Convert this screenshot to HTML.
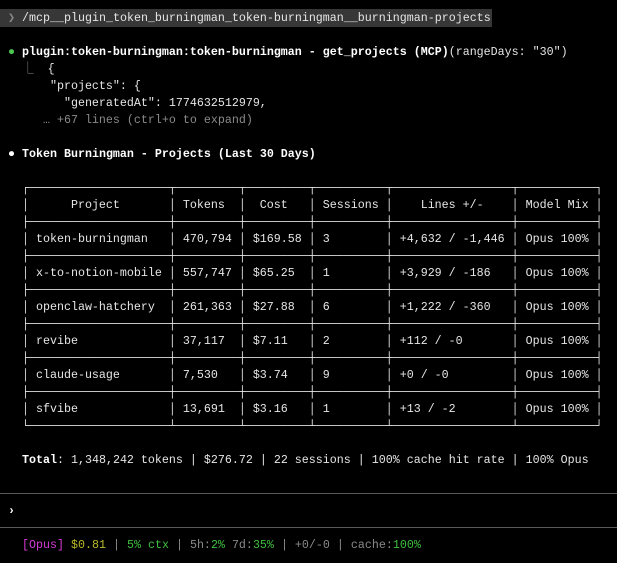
<!DOCTYPE html>
<html><head><meta charset="utf-8"><style>
html,body{margin:0;padding:0;background:#000;width:617px;height:563px;overflow:hidden}
body{font-family:"Liberation Mono","DejaVu Sans Mono",monospace;font-size:11.66px;color:#e6e6e6;position:relative}
.l{position:absolute;left:1px;height:17px;line-height:17px;white-space:pre}
b{font-weight:bold;color:#fff}
.g{color:#8a8a8a}
.hl{position:absolute;left:0;top:9px;width:492px;height:18px;background:#373737}
.rule{position:absolute;left:0;width:617px;height:1px;background:#5a5a5a}
</style></head><body>
<div class="hl"></div>
<div class="l" style="top:9.5px"> <span class="g">❯</span> /mcp__plugin_token_burningman_token-burningman__burningman-projects</div>
<div class="l" style="top:43.5px"> <span style="color:#4cc552">●</span> <b>plugin:token-burningman:token-burningman - get_projects (MCP)</b>(rangeDays: "30")</div>
<div class="l" style="top:60.5px">   <span class="g">⎿</span>  {</div>
<div class="l" style="top:77.5px">       "projects": {</div>
<div class="l" style="top:94.5px">         "generatedAt": 1774632512979,</div>
<div class="l g" style="top:111.5px">      … +67 lines (ctrl+o to expand)</div>
<div class="l" style="top:145.5px"> <span style="color:#fff">●</span> <b>Token Burningman - Projects (Last 30 Days)</b></div>
<div class="l" style="top:179.5px">   ┌────────────────────┬─────────┬─────────┬──────────┬─────────────────┬───────────┐</div>
<div class="l" style="top:196.5px">   │      Project       │ Tokens  │  Cost   │ Sessions │    Lines +/-    │ Model Mix │</div>
<div class="l" style="top:213.5px">   ├────────────────────┼─────────┼─────────┼──────────┼─────────────────┼───────────┤</div>
<div class="l" style="top:230.5px">   │ token-burningman   │ 470,794 │ $169.58 │ 3        │ +4,632 / -1,446 │ Opus 100% │</div>
<div class="l" style="top:247.5px">   ├────────────────────┼─────────┼─────────┼──────────┼─────────────────┼───────────┤</div>
<div class="l" style="top:264.5px">   │ x-to-notion-mobile │ 557,747 │ $65.25  │ 1        │ +3,929 / -186   │ Opus 100% │</div>
<div class="l" style="top:281.5px">   ├────────────────────┼─────────┼─────────┼──────────┼─────────────────┼───────────┤</div>
<div class="l" style="top:298.5px">   │ openclaw-hatchery  │ 261,363 │ $27.88  │ 6        │ +1,222 / -360   │ Opus 100% │</div>
<div class="l" style="top:315.5px">   ├────────────────────┼─────────┼─────────┼──────────┼─────────────────┼───────────┤</div>
<div class="l" style="top:332.5px">   │ revibe             │ 37,117  │ $7.11   │ 2        │ +112 / -0       │ Opus 100% │</div>
<div class="l" style="top:349.5px">   ├────────────────────┼─────────┼─────────┼──────────┼─────────────────┼───────────┤</div>
<div class="l" style="top:366.5px">   │ claude-usage       │ 7,530   │ $3.74   │ 9        │ +0 / -0         │ Opus 100% │</div>
<div class="l" style="top:383.5px">   ├────────────────────┼─────────┼─────────┼──────────┼─────────────────┼───────────┤</div>
<div class="l" style="top:400.5px">   │ sfvibe             │ 13,691  │ $3.16   │ 1        │ +13 / -2        │ Opus 100% │</div>
<div class="l" style="top:417.5px">   └────────────────────┴─────────┴─────────┴──────────┴─────────────────┴───────────┘</div>
<div class="l" style="top:451.5px">   <b>Total</b>: 1,348,242 tokens | $276.72 | 22 sessions | 100% cache hit rate | 100% Opus</div>
<div class="rule" style="top:493px"></div>
<div class="l" style="top:502.5px"> <b>›</b></div>
<div class="rule" style="top:527px"></div>
<div class="l" style="top:536.5px">   <span style="color:#d63bd6">[Opus]</span> <span style="color:#b8b82a">$0.81</span> <span class="g">|</span> <span style="color:#3fbf3f">5% ctx</span> <span class="g">| 5h:</span><span style="color:#3fbf3f">2%</span> <span class="g">7d:</span><span style="color:#3fbf3f">35%</span> <span class="g">| +0/-0 | cache:</span><span style="color:#3fbf3f">100%</span></div>
</body></html>
